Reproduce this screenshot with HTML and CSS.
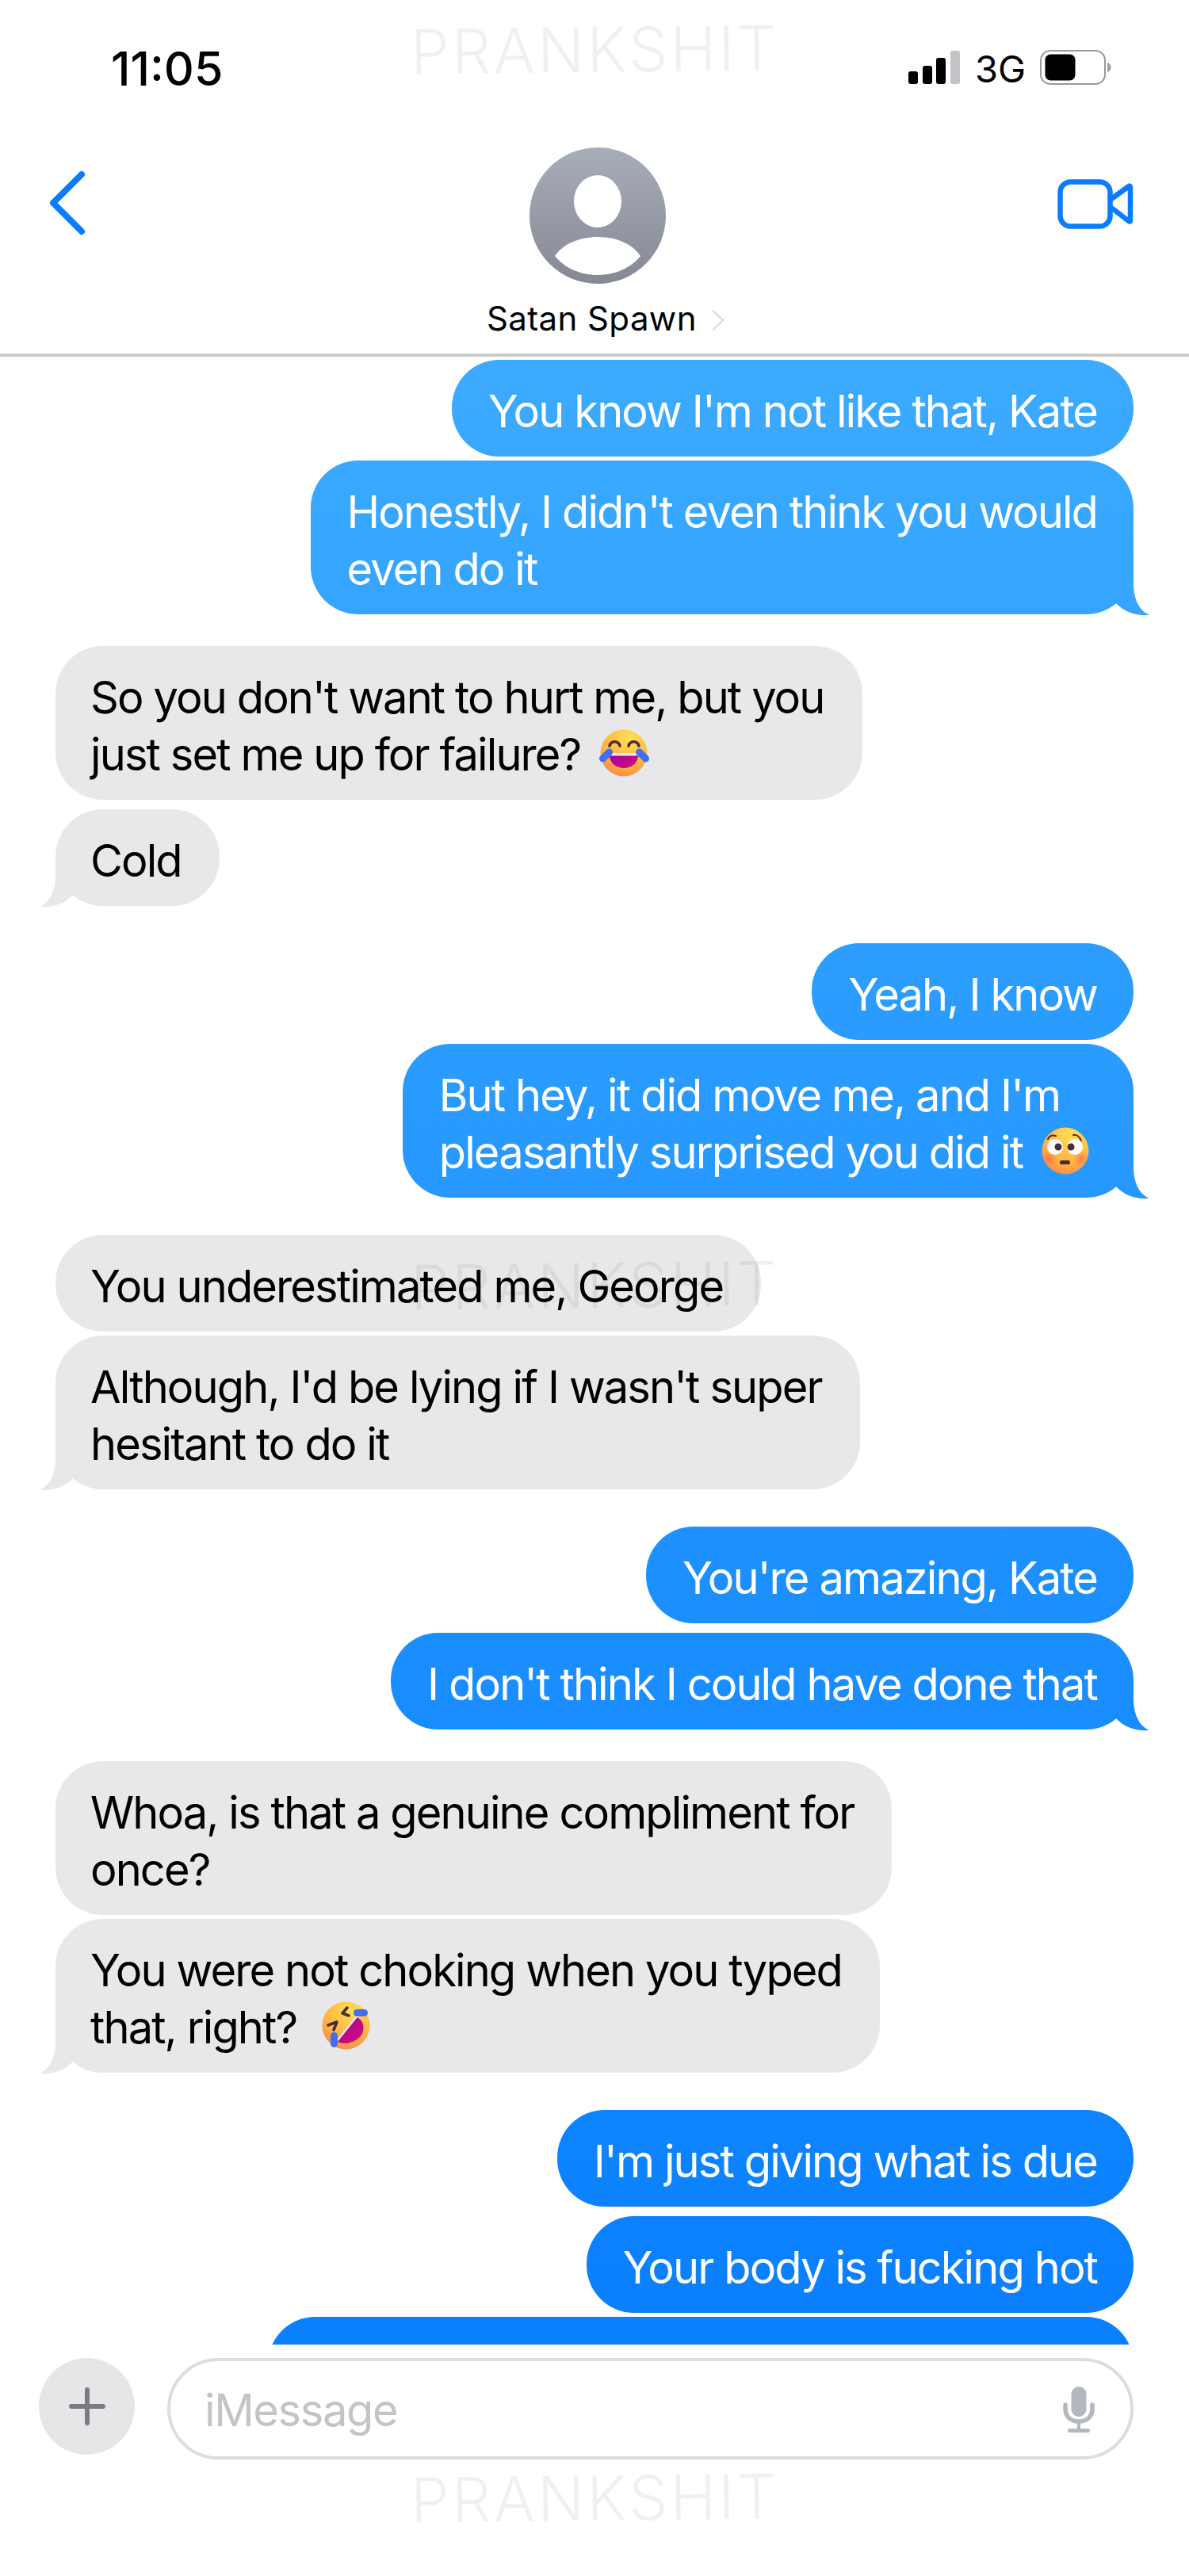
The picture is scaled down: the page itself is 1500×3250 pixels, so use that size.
FILE: index.html
```html
<!DOCTYPE html>
<html lang="en">

<head>
    <meta charset="UTF-8">
    <title>Messages</title>
    <link rel="stylesheet" href="styles.css">
</head>

<body>
    <svg class="defs" width="0" height="0">
        <defs>
            <radialGradient id="cara" cx="0.62" cy="0.18" r="0.95">
                <stop offset="0" stop-color="#ffdf55"/>
                <stop offset="0.6" stop-color="#ffb340"/>
                <stop offset="0.88" stop-color="#fb8f4a"/>
                <stop offset="1" stop-color="#ee6fa0"/>
            </radialGradient>
            <linearGradient id="boca" x1="0" y1="0" x2="1" y2="1">
                <stop offset="0" stop-color="#a0009c"/>
                <stop offset="1" stop-color="#d8107c"/>
            </linearGradient>
        </defs>
    </svg>

    <div class="status">
        <span class="hora">11:05</span>
        <div class="status-dir">
            <svg class="sinal" width="66" height="42" viewBox="0 0 66 42">
                <rect x="0" y="26" width="12" height="16" rx="3" fill="#000"/>
                <rect x="18" y="19" width="12" height="23" rx="3" fill="#000"/>
                <rect x="35" y="9" width="12" height="33" rx="3" fill="#000"/>
                <rect x="53" y="0" width="12" height="42" rx="3" fill="#c3c3c8"/>
            </svg>
            <span class="rede">3G</span>
            <svg class="bateria" width="90" height="44" viewBox="0 0 90 44">
                <rect x="1" y="1" width="81" height="42" rx="12" fill="none" stroke="#9a9a9c" stroke-width="2"/>
                <rect x="6.500" y="5.500" width="38" height="33" rx="7" fill="#000"/>
                <path d="M85 16c3 1 4.500 3 4.500 6s-1.500 5-4.500 6z" fill="#a0a0a2"/>
            </svg>
        </div>
    </div>

    <div class="topo">
        <svg class="voltar" width="48" height="80" viewBox="0 0 48 80">
            <path d="M43 4L7 40l36 36" fill="none" stroke="#0a7cff" stroke-width="8" stroke-linecap="round" stroke-linejoin="round"/>
        </svg>
        <div class="contato">
            <svg class="avatar" width="172" height="172" viewBox="0 0 172 172">
                <defs>
                    <linearGradient id="fundoAvatar" x1="0" y1="0" x2="0" y2="1">
                        <stop offset="0" stop-color="#a7adb9"/>
                        <stop offset="1" stop-color="#868994"/>
                    </linearGradient>
                </defs>
                <circle cx="86" cy="86" r="86" fill="url(#fundoAvatar)"/>
                <ellipse cx="86" cy="68" rx="30" ry="33" fill="#fff"/>
                <path d="M32 137C42 122 62 113 86 113S130 122 140 137C128 152 108 161 86 161S44 152 32 137z" fill="#fff"/>
            </svg>
            <div class="nome">Satan Spawn
                <svg class="seta" width="16" height="26" viewBox="0 0 16 26">
                    <path d="M1.500 1l13 12-13 12" fill="none" stroke="#d8d8dc" stroke-width="1.800" stroke-linecap="round"/>
                </svg>
            </div>
        </div>
        <svg class="video" width="96" height="64" viewBox="0 0 96 64">
            <rect x="3.500" y="3.500" width="63" height="56" rx="13" fill="none" stroke="#0a7cff" stroke-width="6.500"/>
            <path d="M68 25L90 9c1-1 2-.5 2 1v42c0 1.500-1 2-2 1L68 36" fill="none" stroke="#0a7cff" stroke-width="6.500" stroke-linejoin="round" stroke-linecap="round"/>
        </svg>
    </div>

    <div class="conversa">
        <div class="msg enviada">You know I'm not like that, Kate</div>
        <div class="msg enviada cauda">Honestly, I didn't even think you would<br>even do it</div>

        <div class="msg recebida grupo-curto longe">So you don't want to hurt me, but you<br>just set me up for failure?
            <svg class="emoji" width="63" height="60" viewBox="0 0 63 60">
                <circle cx="31" cy="30" r="29.500" fill="url(#cara)"/>
                <path d="M13 21c2-7 11-7 13 0M37 21c2-7 11-7 13 0" fill="none" stroke="#4a2c3a" stroke-width="3.500" stroke-linecap="round"/>
                <path d="M13 31h36c1 11-8 18-18 18s-19-7-18-18z" fill="url(#boca)"/>
                <path d="M13 30h36v3.500H13z" fill="#f4e6f6"/>
                <path d="M4.500 37L12.500 29M50.500 29L58.500 37" stroke="#3f70f4" stroke-width="9" stroke-linecap="round"/>
            </svg>
        </div>
        <div class="msg recebida cauda">Cold</div>

        <div class="msg enviada grupo">Yeah, I know</div>
        <div class="msg enviada cauda">But hey, it did move me, and I'm<br>pleasantly surprised you did it
            <svg class="emoji emoji-fim" width="60" height="60" viewBox="0 0 60 60">
                <defs>
                    <radialGradient id="rubor" cx="0.5" cy="0.5" r="0.5">
                        <stop offset="0" stop-color="#f9604f" stop-opacity="0.6"/>
                        <stop offset="1" stop-color="#f9604f" stop-opacity="0"/>
                    </radialGradient>
                </defs>
                <circle cx="30" cy="30" r="29.500" fill="url(#cara)"/>
                <circle cx="10" cy="40" r="10" fill="url(#rubor)"/>
                <circle cx="50" cy="40" r="10" fill="url(#rubor)"/>
                <circle cx="17" cy="25" r="10" fill="#fff"/>
                <circle cx="42" cy="25" r="10" fill="#fff"/>
                <circle cx="21" cy="25" r="4.500" fill="#4a2c3a"/>
                <circle cx="37" cy="25" r="4.500" fill="#4a2c3a"/>
                <path d="M8 15c2-4 6-5 10-4M40 10c4-1 8 2 10 7" fill="none" stroke="#4a2c3a" stroke-width="2" stroke-linecap="round"/>
                <rect x="23" y="42" width="13" height="5" rx="2.500" fill="#4a2c3a"/>
            </svg>
        </div>

        <div class="msg recebida grupo">You underestimated me, George</div>
        <div class="msg recebida cauda">Although, I'd be lying if I wasn't super<br>hesitant to do it</div>

        <div class="msg enviada grupo longe">You're amazing, Kate</div>
        <div class="msg enviada cauda">I don't think I could have done that</div>

        <div class="msg recebida grupo-curto">Whoa, is that a genuine compliment for<br>once?</div>
        <div class="msg recebida cauda">You were not choking when you typed<br>that, right?
            <svg class="emoji emoji-longe" width="61" height="61" viewBox="0 0 61 61">
                <circle cx="30.500" cy="30.500" r="30" fill="url(#cara)"/>
                <path d="M20 51L44 20C54 24 55 38 48 45C40 53 28 55 20 51z" fill="url(#boca)"/>
                <path d="M19 50L45 18" stroke="#f4e6f6" stroke-width="2.500"/>
                <path d="M32 8l-6 7 8 3M8 30l11-4-4 10" fill="none" stroke="#4a2c3a" stroke-width="3.500" stroke-linecap="round" stroke-linejoin="round"/>
                <rect x="40" y="10" width="18" height="9" rx="4.500" fill="#3f70f4"/>
                <rect x="11" y="39" width="9" height="19" rx="4.500" fill="#3f70f4"/>
            </svg>
        </div>

        <div class="msg enviada grupo longe">I'm just giving what is due</div>
        <div class="msg enviada">Your body is fucking hot</div>
        <div class="msg enviada ultima">&nbsp;</div>
    </div>

    <div class="entrada">
        <div class="mais">
            <svg width="46" height="48" viewBox="0 0 46 48">
                <path d="M23 3v42M3 24h40" stroke="#7b7c80" stroke-width="6" stroke-linecap="round"/>
            </svg>
        </div>
        <div class="caixa">
            <span class="placeholder">iMessage</span>
            <svg class="mic" width="40" height="58" viewBox="0 0 40 58">
                <rect x="10.500" y="0" width="19" height="38" rx="9.500" fill="#b3b8c0"/>
                <path d="M3 23v5c0 10 7 16 17 16s17-6 17-16v-5" fill="none" stroke="#b3b8c0" stroke-width="5.500" stroke-linecap="round"/>
                <path d="M20 44v10" stroke="#b3b8c0" stroke-width="4"/>
                <rect x="6" y="53" width="28" height="5" rx="2.500" fill="#b3b8c0"/>
            </svg>
        </div>
    </div>

    <div class="marca marca-topo">PRANKSHIT</div>
    <div class="marca marca-meio">PRANKSHIT</div>
    <div class="marca marca-base">PRANKSHIT</div>
</body>

</html>
```

FILE: styles.css
```css
* {
    box-sizing: border-box;
}

body {
    margin: 0;
    width: 1500px;
    height: 3250px;
    position: relative;
    overflow: hidden;
    background-color: #ffffff;
    font-family: Inter, "Liberation Sans", sans-serif;
    color: #000;
}

.defs {
    position: absolute;
}

.marca {
    position: absolute;
    left: 518px;
    font-size: 78px;
    line-height: 80px;
    letter-spacing: 3px;
    font-weight: 300;
    color: rgba(0, 0, 0, 0.06);
    white-space: nowrap;
    transform: rotate(-0.6deg);
}

.marca-topo {
    top: 23px;
}

.marca-meio {
    top: 1582px;
}

.marca-base {
    top: 3112px;
}

/* barra de status */
.status {
    height: 170px;
    padding: 54px 98px 0 140px;
    display: flex;
    justify-content: space-between;
}

.hora {
    font-size: 59px;
    line-height: 66px;
    font-weight: 500;
}

.status-dir {
    display: flex;
    align-items: flex-start;
    padding-top: 9px;
}

.sinal {
    margin: 1px 18px 0 0;
}

.rede {
    font-size: 47px;
    line-height: 42px;
    margin: 3px 18px 0 0;
}

/* topo com o contato */
.topo {
    height: 280px;
    border-bottom: 4px solid #cbcbcb;
    display: flex;
    justify-content: space-between;
    padding: 0 70px 0 60px;
}

.voltar {
    margin-top: 46px;
}

.video {
    margin-top: 56px;
}

.contato {
    display: flex;
    flex-direction: column;
    align-items: center;
    margin: 16px 0 0 66px;
}

.avatar {
    display: block;
}

.nome {
    margin-top: 19px;
    font-size: 42px;
    line-height: 50px;
    letter-spacing: 0.4px;
    position: relative;
    left: 10px;
}

.seta {
    margin-left: 7px;
}

/* mensagens */
.conversa {
    height: 2504px;
    margin-top: 4px;
    padding: 0 70px;
    display: flex;
    flex-direction: column;
    overflow: hidden;
}

.msg {
    font-size: 56px;
    line-height: 72px;
    letter-spacing: -1.900px;
    padding: 29px 46px 21px;
    border-radius: 60px;
    margin-bottom: 5px;
    position: relative;
    width: fit-content;
    flex: none;
    white-space: nowrap;
}

.enviada {
    align-self: flex-end;
    color: #fff;
    background: linear-gradient(180deg, #45b2ff 0, #0a80ff 2900px) fixed;
}

.recebida {
    align-self: flex-start;
    padding-left: 44px;
    padding-right: 48px;
    background-color: #e8e8ea;
}

.grupo {
    margin-top: 47px;
}

.grupo-curto {
    margin-top: 40px;
}

.msg.longe {
    margin-bottom: 12px;
}

.msg.cauda {
    margin-bottom: 0;
}

.cauda::after {
    content: "";
    position: absolute;
    bottom: -2px;
    width: 44px;
    height: 63px;
}

.enviada.cauda::after {
    right: -20px;
    background: linear-gradient(180deg, #45b2ff 0, #0a80ff 2900px) fixed;
    clip-path: path("M24 0L24 22C24 40 30 56 44 62C26 63 12 58 2 47L2 0Z");
}

.recebida.cauda::after {
    left: -20px;
    background-color: #e8e8ea;
    clip-path: path("M20 0L20 22C20 40 14 56 0 62C18 63 32 58 42 47L42 0Z");
}

.emoji {
    vertical-align: -8px;
    margin-left: 10px;
}

.emoji-fim {
    margin-right: 10px;
}

.emoji-longe {
    margin-left: 18px;
}

.ultima {
    width: 1092px;
}

/* campo de mensagem */
.entrada {
    display: flex;
    gap: 41px;
    padding: 17px 70px 0 49px;
    align-items: flex-start;
}

.mais {
    width: 121px;
    height: 122px;
    border-radius: 50%;
    background-color: #e5e6e8;
    display: flex;
    align-items: center;
    justify-content: center;
}

.caixa {
    width: 1219px;
    height: 128px;
    border: 4px solid #dddddd;
    border-radius: 64px;
    display: flex;
    align-items: center;
    justify-content: space-between;
    padding: 0 45px 0 43px;
}

.placeholder {
    font-size: 56px;
    letter-spacing: -1.400px;
    margin-top: 4px;
    color: #c4c4c6;
}

.mic {
    margin-top: 2px;
}
```
